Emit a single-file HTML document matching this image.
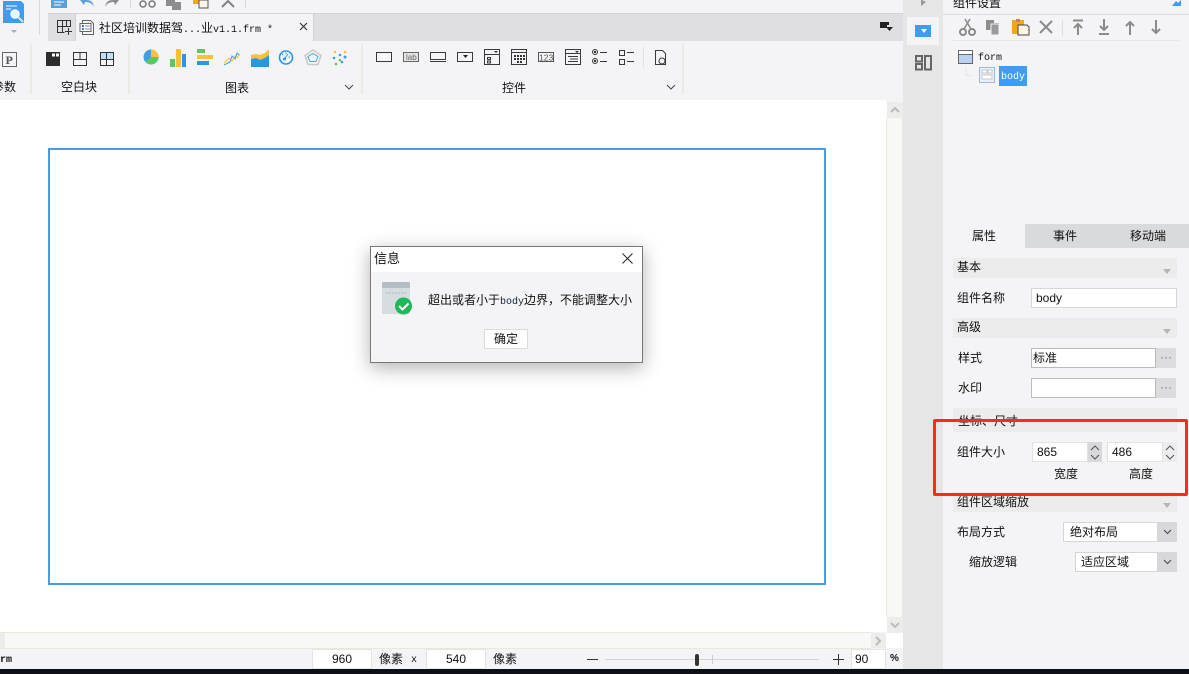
<!DOCTYPE html>
<html><head><meta charset="utf-8">
<style>
html,body{margin:0;padding:0}
body{width:1189px;height:674px;overflow:hidden;position:relative;background:#f4f4f6;font:12px "Liberation Sans","Noto Sans CJK SC",sans-serif;color:#111}
.a{position:absolute}
.t{position:absolute;white-space:nowrap;line-height:16px;font-size:12px}
.b{position:absolute;background:#fff;border:1px solid #d6d6d6;box-sizing:border-box;line-height:18px;font-size:12px;white-space:nowrap}
.sec{position:absolute;left:953px;width:224px;height:20px;background:#ececec}
.tri{position:absolute;width:0;height:0;border-left:4px solid transparent;border-right:4px solid transparent;border-top:5px solid #b5b5b5}
svg{position:absolute;overflow:visible}
.m{font-family:"Liberation Mono",monospace}
</style></head><body>

<!-- top tool row remnants -->
<svg style="left:0;top:0" width="250" height="40" fill="none">
<path d="M3 1h18l3 3v19H3z" fill="#3f9cf5"/><circle cx="15" cy="14" r="4" fill="#dff" stroke="#fff" stroke-width="1.5"/><path d="M18 17l5 5" stroke="#ddd" stroke-width="2"/><path d="M6 6h11M6 9h5" stroke="#fff"/>
<path d="M11 30l3 3 3-3z" fill="#aaa"/>
<path d="M51 0h16v8H51z" fill="#5b9fe0"/><path d="M54 2h10M54 5h7" stroke="#fff"/>
<path d="M80 0l4 5 1-3c4 0 7 1 9 5-1-5-3-7-8-7z" fill="#5b9fe0"/>
<path d="M119 0l-4 5-1-3c-4 0-7 1-9 5 1-5 3-7 8-7z" fill="#8c8c8c"/>
<path d="M130.500 0v8" stroke="#d8d8d8"/>
<circle cx="143" cy="4" r="3" stroke="#777" stroke-width="1.500"/><circle cx="152" cy="4" r="3" stroke="#777" stroke-width="1.500"/>
<path d="M166 0h9v2h6v8h-9V6h-6z" fill="#8c8c8c"/>
<path d="M193 0h6v4h-6z" fill="#f0a818"/><path d="M199 0h9v8h-9z" fill="#fdf6e6" stroke="#555"/>
<path d="M222 7l6-6 6 6" stroke="#808080" stroke-width="2"/>
<path d="M245.500 0v8M39.500 0v35" stroke="#d8d8d8"/>
</svg>

<!-- tab bar -->
<div class="a" style="left:48px;top:13px;width:855px;height:28px;background:#dfdfe1"></div>
<div class="a" style="left:48px;top:13px;width:855px;height:1px;background:#d4d4d4"></div>
<div class="a" style="left:75px;top:14px;width:239px;height:27px;background:#f4f4f6;border-left:1px solid #d0d0d0;border-right:1px solid #d0d0d0;box-sizing:border-box"></div>
<svg style="left:56px;top:19px" width="20" height="18" fill="none" stroke="#333"><path d="M1.500 1.500h13v6h-13zM1.500 7.500v6h7M6.500 1.500v12M10.500 1.500v6M12.500 9v7M9 12.500h7"/></svg>
<svg style="left:79px;top:20px" width="16" height="16" fill="none"><path d="M3.500 .5h8l3 3v11h-11z" stroke="#666"/><path d="M1 3.500h11v8H1z" fill="#fff" stroke="#666"/><path d="M3 5h2v2H3z M3 8h2v2H3z" fill="#3b7fd0"/><path d="M6 6h5M6 9h5" stroke="#888"/></svg>
<div class="t" style="left:99px;top:20px">社区培训数据驾<span class="m" style="font-size:10px">...</span>业<span class="m" style="font-size:10px">v1.1.frm *</span></div>
<svg style="left:299px;top:22px" width="10" height="10" stroke="#333" stroke-width="1.200"><path d="M1 1l7 7M8 1l-7 7"/></svg>
<svg style="left:880px;top:22px" width="14" height="12"><path d="M0 0h9v3H7v3H0z" fill="#222"/><path d="M6 5h7l-3.500 4z" fill="#222"/></svg>

<!-- toolbar -->
<div class="a" style="left:0;top:41px;width:903px;height:59px;background:#f4f4f6"></div>
<div class="a" style="left:30px;top:44px;width:2px;height:50px;background:#ecebe3"></div>
<div class="a" style="left:128px;top:44px;width:2px;height:50px;background:#ecebe3"></div>
<div class="a" style="left:361px;top:44px;width:2px;height:50px;background:#ecebe3"></div>
<div class="a" style="left:682px;top:44px;width:2px;height:50px;background:#ecebe3"></div>
<div class="a" style="left:643px;top:47px;width:1px;height:20px;background:#e0e0e0"></div>

<svg style="left:0;top:44px" width="700" height="26" fill="none">
<!-- param -->
<rect x="2.500" y="8.500" width="14" height="14" stroke="#666"/>
<text x="5.500" y="20" font-family="Liberation Serif" font-weight="bold" font-size="12" fill="#555">P</text>
<!-- blank blocks -->
<path d="M46 8h14v14H46z" fill="#2d2d2d"/><path d="M52 9.500h3v3h-3zM56 9.500h3v3h-3z" fill="#fff"/>
<path d="M73.500 8.500h13v13h-13zM73.500 15.500h13M80 8.500v7" stroke="#333"/>
<path d="M101 9h5v6h-5zM107 9h6v6h-6z" fill="#bfe0f5"/><path d="M100.500 8.500h13v13h-13zM100.500 15.500h13M106.500 8.500v13" stroke="#333"/>
<!-- pie -->
<circle cx="151" cy="13" r="7.500" fill="#3f9ee8"/><path d="M151 13V5.500a7.500 7.500 0 0 1 7.500 7.500z" fill="#fcc038"/><path d="M151 13h7.500a7.500 7.500 0 0 1-13 5z" fill="#5cc95c"/>
<!-- bars -->
<rect x="170" y="15" width="5" height="8" fill="#5cc85c"/><rect x="176" y="5" width="5" height="18" fill="#fcc038"/><rect x="182" y="10" width="4" height="13" fill="#2a97e4"/>
<rect x="197" y="5" width="8" height="4" fill="#5cc85c"/><rect x="197" y="11" width="16" height="4" fill="#fcc038"/><rect x="197" y="17" width="12" height="4" fill="#2a97e4"/>
<path d="M224 19l5-5 3 3 3-5 2 2 3-4" stroke="#fcc038"/><path d="M224 21l6-3 2-6 3 3 2-6 2 2" stroke="#3f9ee8"/>
<path d="M251 11l5-1 4 1 5-2 3-3h1v17h-18z" fill="#fcc038"/><path d="M251 15l5-1 4 2 5-2 4-3v12h-18z" fill="#2a97e4"/>
<circle cx="286" cy="13.500" r="6.500" stroke="#2a97e4" stroke-width="1.600"/><circle cx="284.500" cy="15" r="1.500" fill="#2a97e4"/><path d="M285 14l3-4M282 10l1 1M286 8.500v1.500M290 13h-1.500" stroke="#2a97e4"/>
<path d="M313 6l8 5.500-3 9h-10l-3-9z" stroke="#c8c8c8" stroke-width="1.500"/><path d="M313 9.500l5 3-2 5h-6l-2-5z" stroke="#4aa5e8"/>
<g fill="#3f9ee8"><circle cx="335" cy="8" r="1.300" fill="#fcc038"/><circle cx="345" cy="8" r="1.300" fill="#fcc038"/><circle cx="340" cy="11" r="1.300"/><circle cx="345" cy="13" r="1.500"/><circle cx="334" cy="14" r="1.300"/><circle cx="340" cy="16" r="1.300" fill="#5cc85c"/><circle cx="336" cy="20" r="1.300" fill="#5cc85c"/><circle cx="342" cy="18" r="1.300"/></g>
<!-- controls -->
<g stroke="#3a3a3a">
<rect x="376.500" y="8.500" width="15" height="9"/>
<rect x="403.500" y="8.500" width="15" height="9" stroke="#666" fill="#e5e5e5"/>
<rect x="430.500" y="8.500" width="15" height="7"/><path d="M430 17.500h16"/>
<rect x="457.500" y="8.500" width="15" height="9"/>
<rect x="484.500" y="5.500" width="15" height="15"/><path d="M484.500 10.500h15M487.500 13.500h3v2h-3zM487.500 17h3v2h-3z"/>
<rect x="511.500" y="5.500" width="15" height="15"/><path d="M511.500 8.500h15"/>
<rect x="538.500" y="8.500" width="15" height="9" stroke="#555"/>
<rect x="565.500" y="5.500" width="15" height="15"/><path d="M565.500 9.500h15M568 12.500h10M570 15h8M568 17.500h10"/>
<circle cx="595" cy="8" r="2.500"/><circle cx="595" cy="17" r="2.500"/><path d="M600 8.500h7M600 17.500h7"/>
<rect x="619.500" y="6.500" width="5" height="5"/><rect x="619.500" y="15.500" width="5" height="5"/><path d="M627 8.500h7M627 17.500h7"/>
<path d="M655.500 6.500h7l3 3v11h-10z"/><circle cx="662" cy="17" r="3"/>
</g>
<path d="M463 11h5l-2.500 3z" fill="#222"/><path d="M494 7h4l-2 2zM575 7h4l-2 2z" fill="#333"/>
<g fill="#333"><rect x="514" y="11" width="2" height="2"/><rect x="517" y="11" width="2" height="2"/><rect x="520" y="11" width="2" height="2"/><rect x="523" y="11" width="2" height="2"/><rect x="514" y="14" width="2" height="2"/><rect x="517" y="14" width="2" height="2"/><rect x="520" y="14" width="2" height="2"/><rect x="523" y="14" width="2" height="2"/><rect x="517" y="17" width="2" height="2"/><rect x="520" y="17" width="2" height="2"/></g>
<circle cx="595" cy="8" r="1.200" fill="#333"/><circle cx="595" cy="17" r="1.200" fill="#333"/>
<text x="406" y="16" font-family="Liberation Sans" font-size="8" fill="#666">lab</text>
<text x="539" y="16.500" font-family="Liberation Sans" font-size="8.500" fill="#555">123</text>
</svg>
<div class="t" style="left:-8px;top:79px">参数</div>
<div class="t" style="left:61px;top:79px">空白块</div>
<div class="t" style="left:225px;top:80px">图表</div>
<div class="t" style="left:502px;top:80px">控件</div>
<svg style="left:344px;top:84px" width="10" height="6" fill="none" stroke="#444"><path d="M1 1l4 4 4-4"/></svg>
<svg style="left:666px;top:84px" width="10" height="6" fill="none" stroke="#444"><path d="M1 1l4 4 4-4"/></svg>

<!-- canvas -->
<div class="a" style="left:0;top:100px;width:886px;height:532px;background:#fff"></div>
<div class="a" style="left:48px;top:148px;width:778px;height:437px;border:2px solid #459cec;box-sizing:border-box"></div>

<!-- v scrollbar -->
<div class="a" style="left:886px;top:102px;width:17px;height:546px;background:#fff"></div>
<div class="a" style="left:887px;top:102px;width:16px;height:16px;background:#ececea"></div>
<div class="a" style="left:886px;top:118px;width:17px;height:499px;background:#f8f8f6;border-left:1px solid #ece7dc;border-right:1px solid #ece7dc;box-sizing:border-box"></div>
<div class="a" style="left:887px;top:617px;width:16px;height:16px;background:#ececea"></div>
<svg style="left:890px;top:106px" width="10" height="7" fill="none" stroke="#bbb" stroke-width="2"><path d="M1 6l4-4 4 4"/></svg>
<svg style="left:890px;top:622px" width="10" height="7" fill="none" stroke="#bbb" stroke-width="2"><path d="M1 1l4 4 4-4"/></svg>

<!-- h scrollbar -->
<div class="a" style="left:0;top:632px;width:871px;height:17px;background:#f8f8f6;border-top:1px solid #ece7dc;border-bottom:1px solid #ece7dc;box-sizing:border-box"></div>
<div class="a" style="left:0;top:633px;width:5px;height:15px;background:#ececea"></div>
<div class="a" style="left:871px;top:633px;width:15px;height:15px;background:#ececea"></div>
<svg style="left:875px;top:636px" width="8" height="10" fill="none" stroke="#bbb" stroke-width="2"><path d="M1 1l4 4-4 4"/></svg>

<!-- status bar -->
<div class="a" style="left:0;top:649px;width:903px;height:20px;background:#f4f4f6"></div>
<div class="t m" style="left:0;top:653px;font-size:10px;font-weight:bold">rm</div>
<div class="b" style="left:312px;top:649px;width:60px;height:20px;text-align:center;background:#fff;border-color:#e4e4e4">960</div>
<div class="t" style="left:379px;top:651px">像素</div>
<div class="t m" style="left:411px;top:653px;font-size:10px">x</div>
<div class="b" style="left:426px;top:649px;width:60px;height:20px;text-align:center;border-color:#e4e4e4">540</div>
<div class="t" style="left:493px;top:651px">像素</div>
<div class="a" style="left:587px;top:659px;width:11px;height:1px;background:#333"></div>
<div class="a" style="left:605px;top:659px;width:214px;height:1px;background:#d4d4d4"></div>
<div class="a" style="left:712px;top:655px;width:1px;height:9px;background:#ccc"></div>
<div class="a" style="left:695px;top:654px;width:4px;height:12px;background:#333;border-radius:2px"></div>
<svg style="left:833px;top:654px" width="12" height="12" stroke="#333"><path d="M0 5.500h11M5.500 0v11"/></svg>
<div class="b" style="left:851px;top:649px;width:35px;height:20px;padding-left:3px;border-color:#e4e4e4">90</div>
<div class="t" style="left:890px;top:651px;font-size:10px;font-weight:bold">%</div>
<div class="a" style="left:0;top:669px;width:1189px;height:5px;background:#0c1016"></div>

<!-- side strip -->
<div class="a" style="left:903px;top:0;width:40px;height:669px;background:#e6e6e6"></div>
<div class="a" style="left:907px;top:17px;width:32px;height:28px;background:#f4f4f6"></div>
<div class="a" style="left:915px;top:25px;width:16px;height:12px;background:#3f9cf5"></div>
<div class="tri" style="left:921px;top:29px;border-left-width:3px;border-right-width:3px;border-top:4px solid #fff"></div>
<svg style="left:921px;top:0" width="6" height="7"><path d="M0 0h1l4 2-5 4z" fill="#999"/></svg>
<svg style="left:915px;top:55px" width="18" height="16" fill="none" stroke="#666" stroke-width="2"><rect x="1" y="1" width="6" height="5.500"/><rect x="1" y="9" width="6" height="5.500"/><rect x="10" y="1" width="6" height="13.500"/></svg>

<!-- right panel -->
<div class="a" style="left:943px;top:0;width:246px;height:669px;background:#f4f4f6"></div>
<div class="t" style="left:953px;top:-5px">组件设置</div>
<div class="a" style="left:943px;top:14px;width:246px;height:1px;background:#dcdcdc"></div>
<svg style="left:1172px;top:0" width="10" height="7"><path d="M0 6l4-5 2 2 3-3v6z" fill="#3f9cf5"/></svg>
<svg style="left:958px;top:18px" width="210" height="20" fill="none">
<circle cx="5" cy="14" r="3" stroke="#8a8a8a" stroke-width="2"/><circle cx="14" cy="14" r="3" stroke="#8a8a8a" stroke-width="2"/><path d="M6 11l6-10M13 11L7 1" stroke="#8a8a8a" stroke-width="1.500"/>
<path d="M28 2h8v3h5v12H34v-5h-6z" fill="#8c8c8c"/><path d="M33 6h8v11h-8z" fill="#9a9a9a" stroke="#f4f4f6"/>
<path d="M54 2h12v14H54z" fill="#f0a818"/><path d="M62 7h7l2 2v8H60V7z" fill="#fdf6e6" stroke="#444"/><path d="M58 1h4v3h-4z" fill="#c77"/>
<path d="M82 3l12 12M94 3L82 15" stroke="#8a8a8a" stroke-width="2"/>
<path d="M104.500 2v16" stroke="#dcdcdc"/>
<path d="M115 2.500h10M120 17V6M116 10l4-4 4 4" stroke="#8a8a8a" stroke-width="2"/>
<path d="M146 1v11M142 8l4 4 4-4M141 16h10" stroke="#8a8a8a" stroke-width="2"/>
<path d="M172 17V4M168 8l4-4 4 4" stroke="#8a8a8a" stroke-width="2"/>
<path d="M198 2v13M194 11l4 4 4-4" stroke="#8a8a8a" stroke-width="2"/>
</svg>
<div class="a" style="left:953px;top:40px;width:226px;height:1px;background:#e6e6e6"></div>
<svg style="left:958px;top:50px" width="60" height="36" fill="none"><rect x=".5" y=".5" width="14" height="13" fill="#b8d3f2" stroke="#666"/><path d="M1 1h13v3H1z" fill="#fff"/><path d="M1 4.500h13" stroke="#666"/>
<path d="M8 17.500v8h5" stroke="#e4e4e4"/><rect x="21.500" y="17.500" width="15" height="15" fill="#e8eef3" stroke="#9ebcd4"/><path d="M24 20h5v3h-5zM30 20h4v3h-4zM24 25h10v4H24z" fill="#fff" stroke="#c8c8c8"/></svg>
<div class="t m" style="left:978px;top:51px;font-size:10px">form</div>
<div class="a" style="left:999px;top:66px;width:28px;height:20px;background:#3f9cf5"></div>
<div class="t m" style="left:1001px;top:70px;font-size:10px;color:#fff">body</div>

<!-- property tabs -->
<div class="a" style="left:1025px;top:224px;width:164px;height:24px;background:#d9dadc"></div>
<div class="t" style="left:972px;top:228px">属性</div>
<div class="t" style="left:1053px;top:228px">事件</div>
<div class="t" style="left:1130px;top:228px">移动端</div>

<div class="sec" style="top:258px"></div>
<div class="t" style="left:957px;top:259px">基本</div>
<div class="tri" style="left:1163px;top:269px"></div>
<div class="t" style="left:957px;top:290px">组件名称</div>
<div class="b" style="left:1031px;top:288px;width:146px;height:20px;padding-left:4px">body</div>
<div class="sec" style="top:318px"></div>
<div class="t" style="left:957px;top:319px">高级</div>
<div class="tri" style="left:1163px;top:329px"></div>
<div class="t" style="left:958px;top:350px">样式</div>
<div class="b" style="left:1031px;top:348px;width:125px;height:20px;padding-left:1px;border-color:#bbb">标准</div>
<div class="a" style="left:1156px;top:348px;width:20px;height:20px;background:#dcdcde;color:#777;text-align:center;line-height:18px">···</div>
<div class="t" style="left:958px;top:380px">水印</div>
<div class="b" style="left:1031px;top:378px;width:125px;height:20px;border-color:#bbb"></div>
<div class="a" style="left:1156px;top:378px;width:20px;height:20px;background:#dcdcde;color:#777;text-align:center;line-height:18px">···</div>

<div class="sec" style="top:408px;height:24px"></div>
<div class="t" style="left:958px;top:413px">坐标、尺寸</div>
<div class="t" style="left:957px;top:444px">组件大小</div>
<div class="b" style="left:1032px;top:442px;width:56px;height:20px;padding-left:4px;border-color:#e2e2e2">865</div>
<div class="a" style="left:1088px;top:442px;width:14px;height:20px;background:#d8d8da"></div>
<div class="b" style="left:1107px;top:442px;width:56px;height:20px;padding-left:4px;border-color:#e2e2e2">486</div>
<div class="a" style="left:1163px;top:442px;width:14px;height:20px;background:#ececee"></div>
<svg style="left:1090px;top:444px" width="90" height="17" fill="none" stroke="#555"><path d="M1 6l4-4 4 4M1 11l4 4 4-4M76 6l4-4 4 4M76 11l4 4 4-4"/></svg>
<div class="t" style="left:1054px;top:466px">宽度</div>
<div class="t" style="left:1129px;top:466px">高度</div>

<div class="sec" style="top:492px"></div>
<div class="t" style="left:957px;top:494px">组件区域缩放</div>
<div class="tri" style="left:1163px;top:503px"></div>
<div class="t" style="left:957px;top:524px">布局方式</div>
<div class="b" style="left:1063px;top:522px;width:114px;height:20px;padding-left:6px">绝对布局</div>
<div class="a" style="left:1157px;top:522px;width:20px;height:20px;background:#d8d8da"></div>
<div class="t" style="left:969px;top:554px">缩放逻辑</div>
<div class="b" style="left:1075px;top:552px;width:102px;height:20px;padding-left:5px">适应区域</div>
<div class="a" style="left:1157px;top:552px;width:20px;height:20px;background:#d8d8da"></div>
<svg style="left:1163px;top:529px" width="10" height="36" fill="none" stroke="#444"><path d="M1 1l3.500 3.500L8 1M1 31l3.500 3.500L8 31"/></svg>

<!-- red highlight -->
<div class="a" style="left:933px;top:419px;width:255px;height:77px;border:3px solid #ff2a1a;border-radius:2px;box-sizing:border-box"></div>

<!-- dialog -->
<div class="a" style="left:370px;top:246px;width:273px;height:117px;background:#f4f4f6;border:1px solid #777;box-sizing:border-box;box-shadow:0 5px 18px rgba(0,0,0,.3)"></div>
<div class="a" style="left:371px;top:247px;width:271px;height:25px;background:#fff"></div>
<div class="t" style="left:374px;top:251px;font-size:13px">信息</div>
<svg style="left:622px;top:253px" width="11" height="11" stroke="#222"><path d="M.5.500l10 10M10.500.500l-10 10"/></svg>
<svg style="left:382px;top:282px" width="32" height="34"><rect width="28" height="32" fill="#d5dde1"/><rect width="28" height="6" fill="#b4bec4"/><path d="M4 11h20" stroke="#b0b8bc" stroke-dasharray="2 1"/><circle cx="21.500" cy="24" r="8.500" fill="#1cb95a"/><path d="M17 24l3.500 3.500 6-6" fill="none" stroke="#fff" stroke-width="2"/></svg>
<div class="t" style="left:428px;top:292px">超出或者小于<span class="m" style="font-size:10px;color:#123">body</span>边界，不能调整大小</div>
<div class="b" style="left:484px;top:329px;width:44px;height:20px;text-align:center;border-color:#dcdcdc">确定</div>

</body></html>
